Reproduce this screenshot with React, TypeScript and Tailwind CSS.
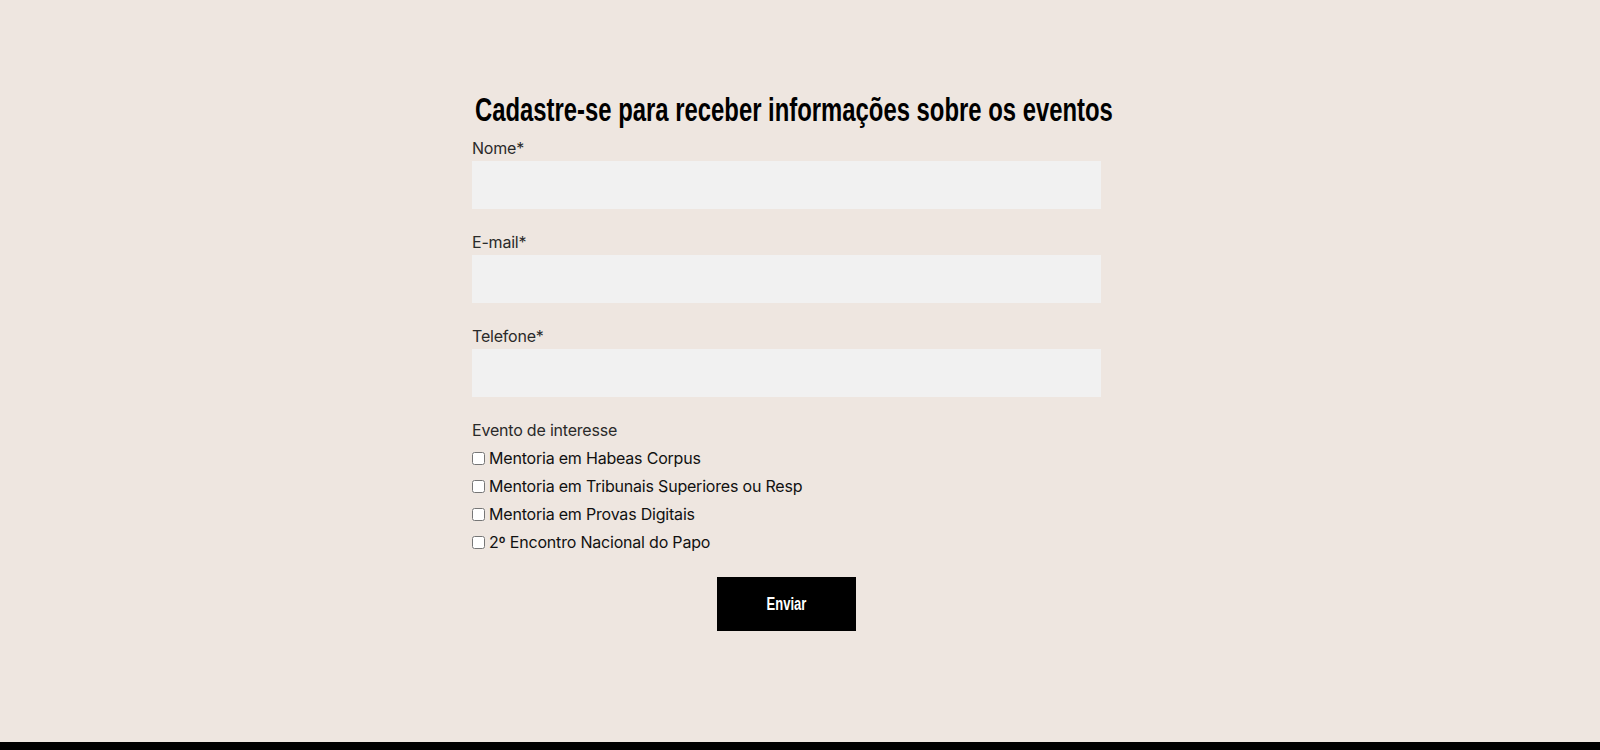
import { useState } from 'react';

const EVENTS = [
  'Mentoria em Habeas Corpus',
  'Mentoria em Tribunais Superiores ou Resp',
  'Mentoria em Provas Digitais',
  '2º Encontro Nacional do Papo',
];

const FIELDS = [
  { id: 'nome', label: 'Nome*', type: 'text' },
  { id: 'email', label: 'E-mail*', type: 'email' },
  { id: 'telefone', label: 'Telefone*', type: 'tel' },
];

// no condensed face installed, so Liberation Sans bold is narrowed to read like Oswald
const HEADING_FONT = "font-['Liberation_Sans',Arial,sans-serif] font-bold";

export default function App() {
  const [checked, setChecked] = useState<Record<string, boolean>>({});

  return (
    <div className="min-h-screen bg-[#eee6e0] font-['Inter','Noto_Sans',sans-serif] text-[#1c1c1c]">
      <section className="h-[742px] pt-[90px]">
        <div className="w-[656px] mx-auto">
          <h2 className={`${HEADING_FONT} text-[33px] leading-[40px] text-black mb-[8px] pl-[3px] whitespace-nowrap`}>
            <span className="inline-block origin-left scale-x-[0.723]">
              Cadastre-se para receber informações sobre os eventos
            </span>
          </h2>

          <form className="w-[629px]" onSubmit={e => e.preventDefault()}>
            {FIELDS.map(f => (
              <div key={f.id} className="mb-[23px]">
                <label htmlFor={f.id} className="block text-[16px] leading-[20px] tracking-[-0.2px] mb-[3px] text-[#2a2a2a]">
                  {f.label}
                </label>
                <input id={f.id} type={f.type} className="block w-full h-[48px] bg-[#f1f1f1] outline-none px-3" />
              </div>
            ))}

            <div className="text-[16px] leading-[20px] tracking-[-0.2px] text-[#2a2a2a] mb-[4px]">Evento de interesse</div>
            {EVENTS.map(ev => (
              <label key={ev} className="flex items-center h-[28px] text-[16px] tracking-[-0.2px] text-[#111]">
                <input
                  type="checkbox"
                  checked={!!checked[ev]}
                  onChange={() => setChecked(c => ({ ...c, [ev]: !c[ev] }))}
                  className="w-[13px] h-[13px] mr-[4px]"
                />
                {ev}
              </label>
            ))}

            <div className="flex justify-center mt-[21px]">
              <button
                type="submit"
                className={`${HEADING_FONT} w-[139px] h-[54px] bg-black text-white text-[18px]`}
              >
                <span className="inline-block scale-x-[0.723]">Enviar</span>
              </button>
            </div>
          </form>
        </div>
      </section>
      <footer className="h-[40px] bg-black" />
    </div>
  );
}
